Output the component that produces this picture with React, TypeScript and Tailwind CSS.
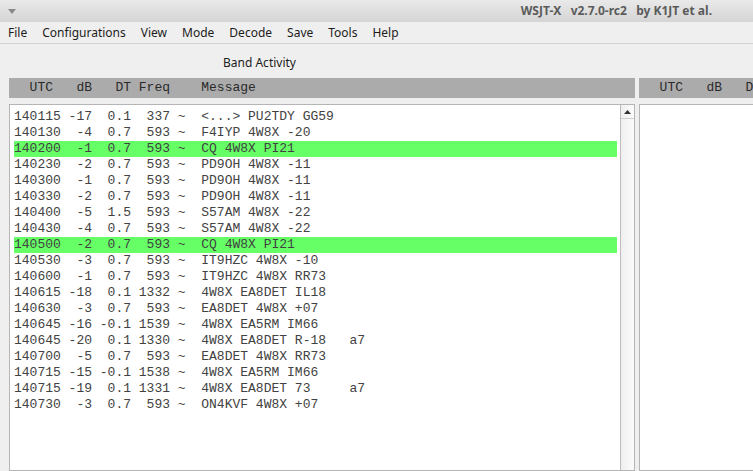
const rows: { text: string; hi?: boolean }[] = [
  { text: '140115 -17  0.1  337 ~  <...> PU2TDY GG59' },
  { text: '140130  -4  0.7  593 ~  F4IYP 4W8X -20' },
  { text: '140200  -1  0.7  593 ~  CQ 4W8X PI21', hi: true },
  { text: '140230  -2  0.7  593 ~  PD9OH 4W8X -11' },
  { text: '140300  -1  0.7  593 ~  PD9OH 4W8X -11' },
  { text: '140330  -2  0.7  593 ~  PD9OH 4W8X -11' },
  { text: '140400  -5  1.5  593 ~  S57AM 4W8X -22' },
  { text: '140430  -4  0.7  593 ~  S57AM 4W8X -22' },
  { text: '140500  -2  0.7  593 ~  CQ 4W8X PI21', hi: true },
  { text: '140530  -3  0.7  593 ~  IT9HZC 4W8X -10' },
  { text: '140600  -1  0.7  593 ~  IT9HZC 4W8X RR73' },
  { text: '140615 -18  0.1 1332 ~  4W8X EA8DET IL18' },
  { text: '140630  -3  0.7  593 ~  EA8DET 4W8X +07' },
  { text: '140645 -16 -0.1 1539 ~  4W8X EA5RM IM66' },
  { text: '140645 -20  0.1 1330 ~  4W8X EA8DET R-18   a7' },
  { text: '140700  -5  0.7  593 ~  EA8DET 4W8X RR73' },
  { text: '140715 -15 -0.1 1538 ~  4W8X EA5RM IM66' },
  { text: '140715 -19  0.1 1331 ~  4W8X EA8DET 73     a7' },
  { text: '140730  -3  0.7  593 ~  ON4KVF 4W8X +07' },
];

const menu = ['File', 'Configurations', 'View', 'Mode', 'Decode', 'Save', 'Tools', 'Help'];

const mono = "font-['Liberation_Mono','Courier_New',monospace]";

export default function App() {
  return (
    <div className="w-[753px] h-[471px] overflow-hidden bg-[#efefef] font-['Noto_Sans',sans-serif] flex flex-col">
      {/* title bar */}
      <div className="h-[22px] shrink-0 flex items-center bg-gradient-to-b from-[#e9e9e9] to-[#d5d5d5]">
        <svg width="8" height="5" viewBox="0 0 8 5" className="ml-[8px] mt-[1px]">
          <path d="M0 0 L8 0 L4 5 Z" fill="#8a8a8a" />
        </svg>
        <div className="ml-auto mr-[41px] text-[12px] font-bold text-[#5b5b5b] whitespace-pre">
          WSJT-X   v2.7.0-rc2   by K1JT et al.
        </div>
      </div>

      {/* menu bar */}
      <div className="h-[22px] shrink-0 flex items-center gap-[15px] pl-[8px] text-[12px] text-[#1c1c1c] border-b border-[#d3d3d3]">
        {menu.map((m) => (
          <span key={m}>{m}</span>
        ))}
      </div>

      {/* label */}
      <div className="h-[34px] shrink-0 flex items-end pb-[6px] pl-[223px] text-[12px] text-[#1c1c1c]">
        Band Activity
      </div>

      {/* column headers */}
      <div className="h-[20px] shrink-0 flex gap-[4px] pl-[9px]">
        <div className={`w-[626px] shrink-0 bg-[#ababab] text-[13px] text-[#2a2a2a] whitespace-pre flex items-center pl-[5px] ${mono}`}>
          {'  UTC   dB   DT Freq    Message'}
        </div>
        <div className={`flex-1 min-w-0 overflow-hidden bg-[#ababab] text-[13px] text-[#2a2a2a] whitespace-pre flex items-center pl-[5px] ${mono}`}>
          {'  UTC   dB   DT Freq    Message'}
        </div>
      </div>

      {/* panels */}
      <div className="flex-1 flex gap-[4px] pl-[9px] mt-[6px] min-h-0">
        <div className="w-[626px] shrink-0 flex border border-[#b5b5b5] bg-white">
          <div className={`flex-1 pt-[4px] pl-[4px] pr-[3px] text-[13px] leading-[16px] text-[#424242] ${mono}`}>
            {rows.map((r, i) => (
              <div key={i} className={`h-[16px] whitespace-pre ${r.hi ? 'bg-[#66ff66]' : ''}`}>
                {r.text}
              </div>
            ))}
          </div>
          <div className="w-[14px] border-l border-[#bdbdbd] bg-gradient-to-r from-[#efefef] to-[#fbfbfb] flex flex-col">
            <div className="h-[14px] border-b border-[#cfcfcf] flex items-center justify-center">
              <svg width="7" height="4" viewBox="0 0 7 4">
                <path d="M0 4 L7 4 L3.5 0 Z" fill="#333" />
              </svg>
            </div>
          </div>
        </div>
        <div className="flex-1 border border-r-0 border-[#b5b5b5] bg-white" />
      </div>
    </div>
  );
}
